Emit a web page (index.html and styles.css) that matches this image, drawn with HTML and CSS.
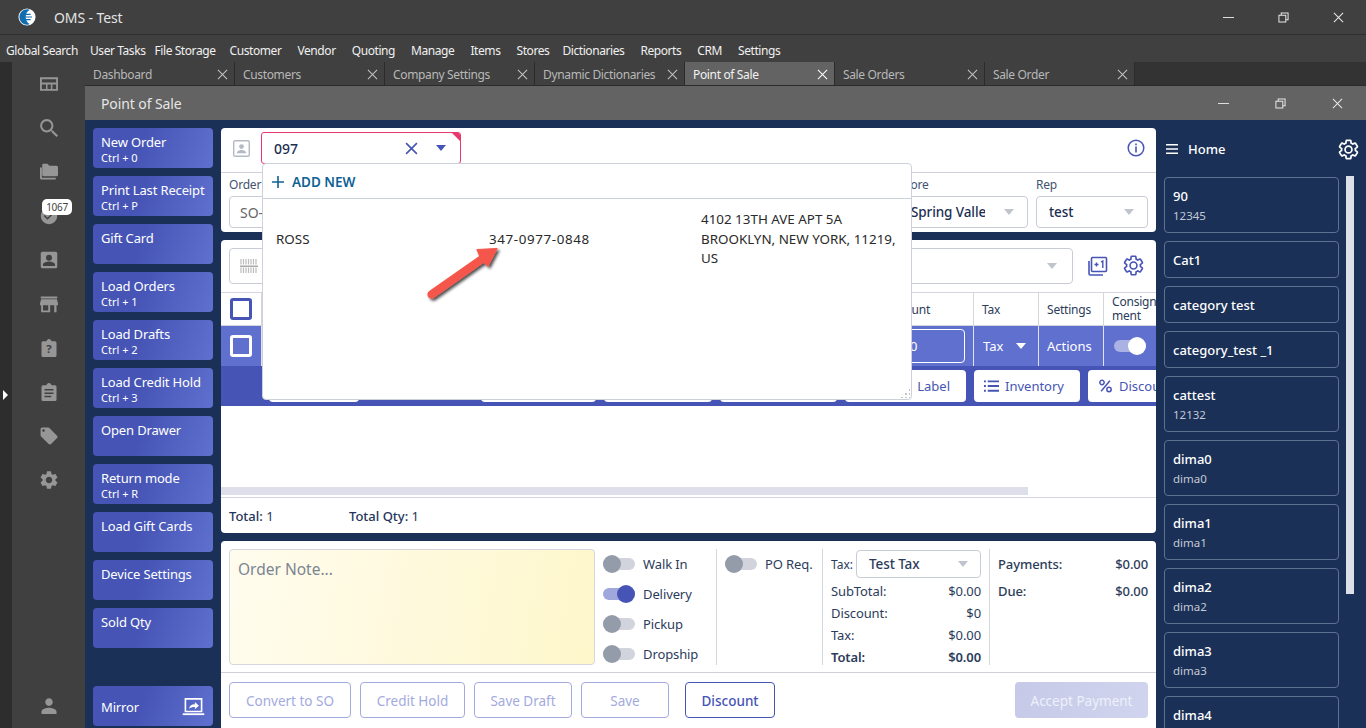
FILE: index.html
```html
<!DOCTYPE html>
<html lang="en">
<head>
<meta charset="utf-8">
<title>OMS - Test</title>
<link rel="stylesheet" href="styles.css">
</head>
<body>
<svg class="sprite" aria-hidden="true">
  <symbol id="i-gear" viewBox="0 0 24 24"><path d="M19.14 12.94c.04-.3.06-.61.06-.94 0-.32-.02-.64-.07-.94l2.03-1.58a.49.49 0 00.12-.61l-1.92-3.32a.488.488 0 00-.59-.22l-2.39.96c-.5-.38-1.03-.7-1.62-.94l-.36-2.54a.484.484 0 00-.48-.41h-3.84c-.24 0-.43.17-.47.41l-.36 2.54c-.59.24-1.13.57-1.62.94l-2.39-.96c-.22-.08-.47 0-.59.22L2.74 8.87c-.12.21-.08.47.12.61l2.03 1.58c-.05.3-.09.63-.09.94s.02.64.07.94l-2.03 1.58a.49.49 0 00-.12.61l1.92 3.32c.12.22.37.29.59.22l2.39-.96c.5.38 1.03.7 1.62.94l.36 2.54c.05.24.24.41.48.41h3.84c.24 0 .44-.17.47-.41l.36-2.54c.59-.24 1.13-.56 1.62-.94l2.39.96c.22.08.47 0 .59-.22l1.92-3.32c.12-.22.07-.47-.12-.61l-2.01-1.58zM12 15.6c-1.98 0-3.6-1.62-3.6-3.6s1.62-3.6 3.6-3.6 3.6 1.62 3.6 3.6-1.62 3.6-3.6 3.6z"/></symbol>
  <symbol id="i-x" viewBox="0 0 12 12"><path d="M1 1l10 10M11 1L1 11" fill="none" stroke="currentColor" stroke-width="1.1"/></symbol>
  <symbol id="i-restore" viewBox="0 0 12 12"><path d="M1 3.5h7.5V11H1zM3.5 3.5V1H11v7.5H8.5" fill="none" stroke="currentColor" stroke-width="1.1"/></symbol>
</svg>

<div class="app">
  <header class="titlebar">
    <svg class="logo" viewBox="0 0 20 20"><circle cx="10" cy="10" r="9.5" fill="#fff"/><path d="M10 1.5a8.5 8.5 0 000 17c1.500 0 2.500-.4 3-.8-2.500-1-4.500-4-4.500-7.700s2-6.700 4.500-7.700c-.5-.4-1.500-.8-3-.8z" fill="#0f6cb0"/><path d="M8 7h6M6.500 10h9M8 13h6" stroke="#0f6cb0" stroke-width="1.300"/></svg>
    <span class="app-name">OMS - Test</span>
    <div class="win-ctrl">
      <span class="wc-btn"><i class="wc-min"></i></span>
      <span class="wc-btn"><svg class="wc-ico"><use href="#i-restore"/></svg></span>
      <span class="wc-btn"><svg class="wc-ico"><use href="#i-x"/></svg></span>
    </div>
  </header>

  <nav class="menubar">
    <span>Global Search</span><span>User Tasks</span><span>File Storage</span><span>Customer</span><span>Vendor</span><span>Quoting</span><span>Manage</span><span>Items</span><span>Stores</span><span>Dictionaries</span><span>Reports</span><span>CRM</span><span>Settings</span>
  </nav>

  <div class="workarea">
    <div class="strip"><i class="strip-arrow"></i></div>

    <aside class="nav">
      <div class="nav-item"><svg viewBox="0 0 24 24"><path fill-rule="evenodd" d="M0 3h24v18H0zM2.500 5.500v4.500h19V5.500zM2.500 12.500v6h5.500v-6zM10 12.500v6h4.500v-6zM16.500 12.500v6h5v-6z"/></svg></div>
      <div class="nav-item"><svg viewBox="0 0 24 24"><path d="M15.500 14h-.79l-.28-.27A6.470 6.470 0 0016 9.500 6.500 6.500 0 109.500 16c1.610 0 3.090-.59 4.230-1.570l.27.28v.79l5 4.990L20.490 19l-4.990-5zm-6 0C7.010 14 5 11.990 5 9.500S7.010 5 9.500 5 14 7.010 14 9.500 11.990 14 9.500 14z" transform="translate(-4 -4) scale(1.370)"/></svg></div>
      <div class="nav-item"><svg viewBox="0 0 24 24"><path d="M2.500 6H0v14a2 2 0 002 2h19v-2.500H2.500z"/><path d="M22 4H12.500l-2.500-2.500H5a2 2 0 00-2 .5V16a2 2 0 002 2h17a2 2 0 002-2V6a2 2 0 00-2-2z" transform="translate(0 -.500)"/></svg></div>
      <div class="nav-item has-badge"><svg viewBox="0 0 24 24"><path d="M12 1a11 11 0 100 22 11 11 0 000-22zm-2 16l-5-5 1.410-1.410L10 14.170l7.590-7.590L19 8l-9 9z"/></svg><span class="badge">1067</span></div>
      <div class="nav-item"><svg viewBox="0 0 24 24"><path d="M1 3v18a2 2 0 002 2h18a2 2 0 002-2V3a2 2 0 00-2-2H3a2 2 0 00-2 2zm15 6a4 4 0 11-8 0 4 4 0 018 0zM4 18c0-2.700 5.300-4.100 8-4.100s8 1.400 8 4.100v2H4v-2z"/></svg></div>
      <div class="nav-item"><svg viewBox="0 0 24 24"><path d="M23 2H1v2.500h22zM24 13.500V11l-1.500-5.500h-21L0 11v2.500h1.500V23h12v-9.500h5.500V23h3v-9.500zm-13 7H4v-7h7z"/></svg></div>
      <div class="nav-item"><svg viewBox="0 0 24 24"><path d="M20 3h-4.500C15 1.500 13.700 0 12 0S9 1.500 8.500 3H4a2 2 0 00-2 2v17a2 2 0 002 2h16a2 2 0 002-2V5a2 2 0 00-2-2z"/><text x="12" y="19" class="nav-q">?</text></svg></div>
      <div class="nav-item"><svg viewBox="0 0 24 24"><path d="M20 3h-4.500C15 1.500 13.700 0 12 0S9 1.500 8.500 3H4a2 2 0 00-2 2v17a2 2 0 002 2h16a2 2 0 002-2V5a2 2 0 00-2-2zm-5 16H6v-2h9zm3-4.500H6v-2h12zM18 10H6V8h12z"/></svg></div>
      <div class="nav-item"><svg viewBox="0 0 24 24"><path d="M21.410 11.580l-9-9C12.050 2.220 11.550 2 11 2H4c-1.100 0-2 .9-2 2v7c0 .55.22 1.050.59 1.420l9 9c.36.36.86.58 1.410.58.55 0 1.050-.22 1.410-.59l7-7c.37-.36.59-.86.59-1.410 0-.55-.23-1.060-.59-1.420zM5.500 7C4.670 7 4 6.330 4 5.500S4.670 4 5.500 4 7 4.670 7 5.500 6.330 7 5.500 7z" transform="translate(-1.500 -1.500) scale(1.130)"/></svg></div>
      <div class="nav-item"><svg viewBox="0 0 24 24"><use href="#i-gear" transform="translate(-2.400 -2.400) scale(1.200)"/></svg></div>
      <div class="nav-item nav-bottom"><svg viewBox="0 0 24 24"><path d="M12 12c2.900 0 5-2.300 5-5.200S14.900 1.500 12 1.500 7 3.900 7 6.800 9.100 12 12 12zm0 2.200c-3.300 0-10 1.700-10 5V22.500h20v-3.300c0-3.300-6.700-5-10-5z"/></svg></div>
    </aside>

    <div class="desk">
      <div class="tabs">
        <div class="tab"><span>Dashboard</span><svg class="tab-x"><use href="#i-x"/></svg></div>
        <div class="tab"><span>Customers</span><svg class="tab-x"><use href="#i-x"/></svg></div>
        <div class="tab"><span>Company Settings</span><svg class="tab-x"><use href="#i-x"/></svg></div>
        <div class="tab"><span>Dynamic Dictionaries</span><svg class="tab-x"><use href="#i-x"/></svg></div>
        <div class="tab active"><span>Point of Sale</span><svg class="tab-x"><use href="#i-x"/></svg></div>
        <div class="tab"><span>Sale Orders</span><svg class="tab-x"><use href="#i-x"/></svg></div>
        <div class="tab"><span>Sale Order</span><svg class="tab-x"><use href="#i-x"/></svg></div>
      </div>

      <div class="window-title">
        <span class="wt-name">Point of Sale</span>
        <div class="win-ctrl inner">
          <span class="wc-btn"><i class="wc-min"></i></span>
          <span class="wc-btn"><svg class="wc-ico"><use href="#i-restore"/></svg></span>
          <span class="wc-btn"><svg class="wc-ico"><use href="#i-x"/></svg></span>
        </div>
      </div>

      <main class="pos">
        <div class="actions">
          <button class="act"><b>New Order</b><small>Ctrl + 0</small></button>
          <button class="act"><b>Print Last Receipt</b><small>Ctrl + P</small></button>
          <button class="act"><b>Gift Card</b></button>
          <button class="act"><b>Load Orders</b><small>Ctrl + 1</small></button>
          <button class="act"><b>Load Drafts</b><small>Ctrl + 2</small></button>
          <button class="act"><b>Load Credit Hold</b><small>Ctrl + 3</small></button>
          <button class="act"><b>Open Drawer</b></button>
          <button class="act"><b>Return mode</b><small>Ctrl + R</small></button>
          <button class="act"><b>Load Gift Cards</b></button>
          <button class="act"><b>Device Settings</b></button>
          <button class="act"><b>Sold Qty</b></button>
          <button class="act mirror"><b>Mirror</b>
            <svg viewBox="0 0 24 20" class="mirror-ico"><path d="M3 1h18v14H3z" fill="none" stroke="#fff" stroke-width="1.800"/><path d="M0 17h24v2H0z" fill="#fff"/><path d="M7 12c.5-3 2.500-5 6.500-5V4.500L18 8.500l-4.500 4V10c-3 0-5 .5-6.500 2z" fill="#fff"/></svg>
          </button>
        </div>

        <div class="center">
          <section class="card card-top">
            <div class="cust-row">
              <svg class="cust-ico" viewBox="0 0 18 18"><rect x=".75" y=".75" width="16.500" height="16.500" rx="1.500" fill="none" stroke="#b5b9c3" stroke-width="1.500"/><circle cx="9" cy="7" r="2.500" fill="#b5b9c3"/><path d="M4 14c0-2.500 3-3.400 5-3.400s5 .9 5 3.400z" fill="#b5b9c3"/></svg>
              <div class="cust-input">
                <span class="cust-val">097</span>
                <svg class="cust-x" viewBox="0 0 12 12"><path d="M1 1l10 10M11 1L1 11" fill="none" stroke="#4655b5" stroke-width="1.500"/></svg>
                <i class="caret caret-blue"></i>
              </div>
              <svg class="info-ico" viewBox="0 0 18 18"><circle cx="9" cy="9" r="7.800" fill="none" stroke="#4655b5" stroke-width="1.500"/><path d="M8.200 7.500h1.600v6H8.200zM8.200 4.500h1.600v1.700H8.200z" fill="#4655b5"/></svg>
            </div>
            <div class="field-row">
              <div class="field f-order"><label>Order</label><div class="select"><span class="sel-grey">SO-</span></div></div>
              <div class="field f-store"><label>Store</label><div class="select"><span class="sel-val clip">Spring Valley</span><i class="caret"></i></div></div>
              <div class="field f-rep"><label>Rep</label><div class="select rep"><span class="sel-val">test</span><i class="caret"></i></div></div>
            </div>
          </section>

          <section class="card card-items">
            <div class="search-row">
              <div class="scan-box">
                <svg viewBox="0 0 18 14" class="scan-ico"><path d="M1 0v5.500M3.500 0v5.500M6 0v5.500M8.500 0v5.500M11 0v5.500M13.500 0v5.500M16 0v5.500M1 8.500V14M3.500 8.500V14M6 8.500V14M8.500 8.500V14M11 8.500V14M13.500 8.500V14M16 8.500V14" stroke="#bbb" stroke-width="1.200"/><path d="M0 6.500h18v1.500H0z" fill="#aaa"/></svg>
                <i class="caret"></i>
              </div>
              <svg class="s-ico" viewBox="0 0 20 20"><path d="M4.500 1.500h13a1 1 0 011 1v12a1 1 0 01-1 1h-13a1 1 0 01-1-1v-12a1 1 0 011-1z" fill="none" stroke="#4655b5" stroke-width="1.600"/><path d="M1 5v12.500a1.500 1.500 0 001.500 1.500H15" fill="none" stroke="#4655b5" stroke-width="1.600"/><path d="M6.500 8.500h4M8.500 6.500v4M13 6l1.800-1v7" fill="none" stroke="#4655b5" stroke-width="1.400"/></svg>
              <svg class="s-ico gear" viewBox="0 0 24 24"><use href="#i-gear"/></svg>
            </div>

            <div class="tbl-head">
              <div class="cell cb"><i class="check"></i></div>
              <div class="cell"></div>
              <div class="cell">Discount</div>
              <div class="cell">Tax</div>
              <div class="cell">Settings</div>
              <div class="cell small">Consign<br>ment</div>
            </div>
            <div class="tbl-row">
              <div class="cell cb"><i class="check light"></i></div>
              <div class="cell"></div>
              <div class="cell"><div class="disc-input">0</div></div>
              <div class="cell tax-cell">Tax<i class="caret caret-white"></i></div>
              <div class="cell">Actions</div>
              <div class="cell"><span class="toggle on-white"><i></i></span></div>
            </div>
            <div class="tbl-actions">
              <span class="ta-btn w90"></span>
              <span class="ta-btn solid w120"></span>
              <span class="ta-btn w115"></span>
              <span class="ta-btn w108"></span>
              <span class="ta-btn w116"></span>
              <span class="ta-btn w121">Label</span>
              <span class="ta-btn w106"><svg viewBox="0 0 16 14"><path d="M0 1h2v2H0zM0 6h2v2H0zM0 11h2v2H0zM4 1h12v2H4zM4 6h12v2H4zM4 11h12v2H4z" fill="#4655b5"/></svg>Inventory</span>
              <span class="ta-btn grow"><svg viewBox="0 0 16 16"><circle cx="4" cy="4" r="2.500" fill="none" stroke="#4655b5" stroke-width="1.700"/><circle cx="12" cy="12" r="2.500" fill="none" stroke="#4655b5" stroke-width="1.700"/><path d="M13 2L3 14" stroke="#4655b5" stroke-width="1.700"/></svg>Discount</span>
            </div>
            <div class="tbl-fill"></div>
            <div class="hscroll"><i></i></div>
            <div class="totals"><span class="t1"><b>Total:</b> 1</span><span><b>Total Qty:</b> 1</span></div>
          </section>

          <section class="card card-bottom">
            <div class="summary">
              <div class="note">Order Note...</div>
              <div class="toggles">
                <div class="tg"><span class="toggle"><i></i></span>Walk In</div>
                <div class="tg"><span class="toggle on"><i></i></span>Delivery</div>
                <div class="tg"><span class="toggle"><i></i></span>Pickup</div>
                <div class="tg"><span class="toggle"><i></i></span>Dropship</div>
              </div>
              <div class="po"><div class="tg"><span class="toggle"><i></i></span>PO Req.</div></div>
              <div class="amounts">
                <div class="tax-line"><span class="tax-lbl">Tax:</span><div class="select tax-sel"><span class="sel-val">Test Tax</span><i class="caret"></i></div></div>
                <div class="amt"><span>SubTotal:</span><span>$0.00</span></div>
                <div class="amt"><span>Discount:</span><span>$0</span></div>
                <div class="amt"><span>Tax:</span><span>$0.00</span></div>
                <div class="amt strong"><span>Total:</span><span>$0.00</span></div>
              </div>
              <div class="pay">
                <div class="amt p1"><span>Payments:</span><span>$0.00</span></div>
                <div class="amt p2"><span>Due:</span><span>$0.00</span></div>
              </div>
            </div>
            <div class="bottom-btns">
              <button class="btn dis b1">Convert to SO</button>
              <button class="btn dis b2">Credit Hold</button>
              <button class="btn dis b3">Save Draft</button>
              <button class="btn dis b4">Save</button>
              <button class="btn b5">Discount</button>
              <button class="btn accept">Accept Payment</button>
            </div>
          </section>

          <div class="dropdown">
            <div class="dd-add"><svg viewBox="0 0 12 12"><path d="M6 0v12M0 6h12" stroke="#0e6295" stroke-width="1.600"/></svg>ADD NEW</div>
            <div class="dd-row">
              <span class="dd-name">ROSS</span>
              <span class="dd-phone">347-0977-0848</span>
              <span class="dd-addr">4102 13TH AVE APT 5A<br>BROOKLYN, NEW YORK, 11219,<br>US</span>
            </div>
            <i class="dd-grip"></i>
          </div>
          <svg class="pointer" viewBox="0 0 80 60"><defs><filter id="sh" x="-20%" y="-20%" width="150%" height="150%"><feDropShadow dx="2" dy="2" stdDeviation="1.500" flood-color="#000" flood-opacity=".7"/></filter></defs><path d="M71 3.500L51 4.500L53.900 11.200L3.500 46.600A3.500 3.500 0 0 0 7.500 52.400L57.900 17L62 21Z" fill="#f5574b" stroke="#f5574b" stroke-linejoin="round" stroke-width="1.200" filter="url(#sh)"/></svg>
        </div>

        <aside class="side">
          <div class="side-head">
            <svg class="burger" viewBox="0 0 12 10"><path d="M0 0h12v1.600H0zM0 4.200h12v1.600H0zM0 8.400h12V10H0z" fill="#fff"/></svg>
            <span class="home">Home</span>
            <svg class="side-gear" viewBox="0 0 24 24"><use href="#i-gear"/></svg>
          </div>
          <div class="side-body">
            <div class="cat-list">
              <div class="cat"><b>90</b><small>12345</small></div>
              <div class="cat short"><b>Cat1</b></div>
              <div class="cat short"><b>category test</b></div>
              <div class="cat short"><b>category_test _1</b></div>
              <div class="cat"><b>cattest</b><small>12132</small></div>
              <div class="cat"><b>dima0</b><small>dima0</small></div>
              <div class="cat"><b>dima1</b><small>dima1</small></div>
              <div class="cat"><b>dima2</b><small>dima2</small></div>
              <div class="cat"><b>dima3</b><small>dima3</small></div>
              <div class="cat"><b>dima4</b><small>dima4</small></div>
            </div>
            <div class="side-thumb"></div>
          </div>
        </aside>
      </main>
    </div>
  </div>
</div>
</body>
</html>
```
FILE: styles.css
```css
* { box-sizing: border-box; }
html, body { margin: 0; padding: 0; height: 728px; overflow: hidden; }
body { font-family: "Noto Sans", "Open Sans", sans-serif; font-size: 13px; color: #1c2f52; background: #404040; }
.sprite { position: absolute; width: 0; height: 0; }
.app { width: 1366px; height: 728px; display: flex; flex-direction: column; overflow: hidden; }

.titlebar { height: 35px; flex: none; background: #404040; border-bottom: 1px solid #2f2f2f; display: flex; align-items: center; padding-left: 18px; color: #e4e4e4; }
.logo { width: 18px; height: 18px; }
.app-name { margin-left: 18px; font-size: 14px; letter-spacing: -.1px; }
.win-ctrl { margin-left: auto; display: flex; color: #e8e8e8; }
.wc-btn { width: 55px; display: flex; justify-content: center; align-items: center; height: 16px; }
.wc-min { width: 11px; height: 1px; background: #ddd; }
.wc-ico { width: 11px; height: 11px; }
.inner .wc-btn { width: 57px; }

.menubar { height: 27px; flex: none; background: #404040; display: flex; align-items: center; padding: 3px 0 0 6px; gap: 16px; color: #f0f0f0; font-size: 12px; letter-spacing: -.42px; }
.menubar span:nth-child(1) { margin-right: -4px; }
.menubar span:nth-child(2) { margin-right: -7px; }
.menubar span:nth-child(3) { margin-right: -2px; }
.menubar span:nth-child(9) { margin-right: -3px; }

.workarea { flex: 1; display: flex; min-height: 0; }
.strip { width: 12px; flex: none; background: #2d2d2d; position: relative; }
.strip-arrow { position: absolute; left: 3px; top: 328px; border-left: 5px solid #fff; border-top: 5px solid transparent; border-bottom: 5px solid transparent; }
.nav { width: 73px; flex: none; background: #404040; display: flex; flex-direction: column; }
.nav-item { height: 44px; flex: none; display: flex; align-items: center; justify-content: center; position: relative; }
.nav-item svg { width: 18px; height: 18px; fill: #969696; overflow: visible; }
.nav-bottom { margin-top: auto; }
.nav-q { font-size: 15px; font-weight: 700; text-anchor: middle; fill: #404040; }
.badge { position: absolute; left: 30px; top: 5px; width: 30px; height: 16px; background: #fff; border-radius: 5px; color: #444; font-size: 10px; letter-spacing: -.3px; display: flex; align-items: center; justify-content: center; }

.desk { flex: 1; min-width: 0; display: flex; flex-direction: column; }
.tabs { height: 24px; flex: none; background: #333; display: flex; border-bottom: 1px solid #2b2b2b; }
.tab { width: 150px; flex: none; background: #404040; border-right: 1px solid #2b2b2b; display: flex; align-items: center; justify-content: space-between; padding: 2px 6px 0 8px; color: #b8b8b8; font-size: 12px; letter-spacing: -.35px; }
.tab.active { background: #636363; color: #f2f2f2; }
.tab-x { width: 11px; height: 11px; color: #c4c4c4; margin-top: -1px; }
.tab.active .tab-x { color: #fff; }

.window-title { height: 34px; flex: none; background: #636363; display: flex; align-items: center; padding-left: 16px; color: #e6e6e6; font-size: 14px; letter-spacing: -.1px; }

.pos { flex: 1; min-height: 0; background: #1a3057; display: flex; padding: 8px 0 0 8px; overflow: hidden; }

.actions { width: 120px; flex: none; display: flex; flex-direction: column; gap: 8px; }
.act { height: 40px; flex: none; border: 0; border-radius: 4px; background: linear-gradient(110deg, #4655b5 40%, #5f70cf 100%); color: #fff; font-family: inherit; text-align: left; padding: 5px 8px 0; display: flex; flex-direction: column; align-items: flex-start; letter-spacing: -.15px; }
.act b { font-weight: 400; font-size: 13px; line-height: 18px; }
.act small { font-size: 11px; line-height: 13px; letter-spacing: 0; }
.mirror { margin-top: 30px; flex-direction: row; justify-content: space-between; align-items: center; padding: 1px 8px 0; }
.mirror-ico { width: 23px; height: 18px; }

.center { width: 935px; flex: none; margin-left: 8px; display: flex; flex-direction: column; gap: 8px; position: relative; }
.card { background: #fff; border-radius: 4px; flex: none; }

.card-top { height: 104px; }
.cust-row { height: 45px; display: flex; align-items: flex-start; padding-left: 12px; border-bottom: 1px solid #cfd2dc; position: relative; }
.cust-ico { width: 17px; height: 17px; margin-top: 12px; }
.cust-input { width: 200px; height: 32px; margin: 4px 0 0 11px; border: 1px solid #e8386e; border-radius: 3px; position: relative; display: flex; align-items: center; padding-left: 12px; overflow: hidden; }
.cust-input::after { content: ""; position: absolute; right: 0; top: 0; border-top: 8px solid #e8386e; border-left: 8px solid transparent; }
.cust-val { font-size: 14px; font-weight: 500; flex: 1; }
.cust-x { width: 13px; height: 13px; margin-right: 18px; }
.caret { width: 0; height: 0; border-left: 5.500px solid transparent; border-right: 5.500px solid transparent; border-top: 6.500px solid #c0c4cd; }
.caret-blue { border-top-color: #4655b5; margin-right: 14px; border-left-width: 5px; border-right-width: 5px; border-top-width: 6px; }
.caret-white { border-top-color: #fff; margin-left: 13px; }
.info-ico { width: 18px; height: 18px; margin: 11px 11px 0 auto; }

.field-row { display: flex; padding: 5px 8px 0; }
.field label { display: block; font-size: 12px; line-height: 13px; color: #43536f; height: 18px; letter-spacing: -.2px; }
.select { height: 32px; border: 1px solid #c8ccd6; border-radius: 4px; display: flex; align-items: center; padding: 0 10px; }
.f-order { width: 671px; }
.f-order .select { width: 200px; }
.sel-grey { color: #666; font-size: 14px; }
.f-store { width: 128px; }
.sel-val { font-size: 13.500px; font-weight: 500; letter-spacing: -.1px; }
.clip { width: 74px; overflow: hidden; white-space: nowrap; flex: none; }
.f-store .caret, .rep .caret { margin-left: auto; margin-right: 3px; }
.f-rep { width: 112px; margin-left: 8px; }
.rep { padding-left: 12px; }

.card-items { height: 293px; display: flex; flex-direction: column; }
.search-row { height: 52px; flex: none; display: flex; align-items: flex-start; padding: 8px 0 0 8px; }
.scan-box { width: 844px; height: 36px; border: 1px solid #c8ccd6; border-radius: 4px; display: flex; align-items: center; padding: 0 15px 0 10px; justify-content: space-between; }
.scan-ico { width: 18px; height: 14px; }
.s-ico { width: 20px; height: 20px; margin: 8px 0 0 15px; flex: none; }
.gear { width: 23px; height: 23px; margin: 6px 0 0 14px; fill: none; stroke: #4655b5; stroke-width: 1.700; }

.tbl-head, .tbl-row { display: grid; grid-template-columns: 40px 612px 100px 65px 65px 53px; flex: none; }
.tbl-head { height: 34px; border-top: 1px solid #d4d6de; border-bottom: 1px solid #d4d6de; font-size: 12px; color: #2c3c5b; letter-spacing: -.2px; }
.tbl-row { height: 40px; background: #5f70cf; color: #fff; font-size: 13px; }
.cell { display: flex; align-items: center; padding-left: 8px; border-left: 1px solid #d4d6de; }
.cell.cb { border-left: 0; padding-left: 9px; }
.tbl-row .cell { border-left-color: #dfe2f3; }
.small { font-size: 12px; line-height: 14px; white-space: nowrap; overflow: hidden; }
.check { width: 22px; height: 22px; border: 3px solid #4655b5; border-radius: 3px; }
.check.light { border-color: #fff; background: #5f70cf; }
.disc-input { width: 83px; height: 34px; border: 1px solid #fff; border-radius: 4px; padding: 7px 0 0 27px; }
.tax-cell { padding-left: 9px; }
.toggle { width: 32px; height: 12px; border-radius: 6px; background: #d1d4dc; position: relative; display: inline-block; flex: none; }
.toggle i { position: absolute; left: 0; top: -3px; width: 18px; height: 18px; border-radius: 50%; background: #949ba9; }
.toggle.on { background: #a0a7dc; }
.toggle.on i { left: 14px; background: #4655b5; }
.on-white { background: #a9b2e3; margin-left: 2px; }
.on-white i { left: 14px; background: #fff; }

.tbl-actions { height: 40px; flex: none; background: #4655b5; display: flex; gap: 8px; padding: 4px 0 4px 48px; overflow: hidden; }
.ta-btn { height: 32px; background: #fff; border-radius: 4px; flex: none; color: #4655b5; display: flex; align-items: center; gap: 6px; padding-left: 10px; font-size: 13px; }
.ta-btn svg { width: 15px; height: 14px; flex: none; }
.ta-btn.solid { background: #4655b5; }
.w90 { width: 90px; }
.w120 { width: 108px; margin: 0 -1px; }
.w115 { width: 115px; }
.w108 { width: 108px; }
.w116 { width: 117px; }
.w121 { width: 121px; justify-content: flex-end; padding-right: 16px; }
.w106 { width: 106px; }
.grow { width: 90px; }
.tbl-fill { height: 81px; flex: none; }
.hscroll { height: 10px; flex: none; }
.hscroll i { display: block; width: 807px; height: 8px; background: #dde0ea; }
.totals { flex: 1; border-top: 1px solid #d4d6de; display: flex; align-items: center; padding: 1px 0 0 8px; font-size: 13px; color: #24365a; }
.totals b { font-weight: 500; }
.t1 { width: 120px; }

.card-bottom { height: 190px; }
.summary { height: 132px; padding: 8px 8px 0; display: flex; border-bottom: 1px solid #cfd2dc; }
.note { width: 366px; height: 116px; flex: none; background: linear-gradient(100deg, #fffcee, #fef7cb); border: 1px solid #d6d6de; border-radius: 4px; padding: 9px 8px; font-size: 15.500px; line-height: 20px; color: #7b8593; }
.toggles { width: 122px; flex: none; height: 116px; padding: 0 0 0 8px; border-right: 1px solid #d4d6de; display: flex; flex-direction: column; }
.tg { height: 30px; flex: none; display: flex; align-items: center; gap: 8px; font-size: 13px; color: #2c3c5b; letter-spacing: -.1px; }
.po { width: 106px; flex: none; height: 116px; padding-left: 8px; border-right: 1px solid #d4d6de; }
.amounts { width: 167px; flex: none; height: 116px; padding: 0 8px; border-right: 1px solid #d4d6de; font-size: 13px; color: #2c3c5b; }
.tax-line { display: flex; align-items: center; height: 30px; gap: 3px; margin-bottom: 1px; }
.tax-lbl { font-size: 12px; }
.tax-sel { width: 125px; height: 28px; padding: 0 12px; justify-content: space-between; }
.amt { display: flex; justify-content: space-between; height: 22px; line-height: 22px; letter-spacing: -.1px; }
.strong { font-weight: 600; }
.pay { flex: 1; padding-left: 8px; color: #2c3c5b; }
.p1 { font-weight: 500; height: 30px; line-height: 30px; }
.p2 { font-weight: 500; height: 24px; line-height: 24px; }
.bottom-btns { display: flex; padding: 9px 8px 0; }
.btn { height: 36px; border: 1px solid #4655b5; border-radius: 4px; background: #fff; font-family: inherit; font-size: 13.500px; color: #4655b5; font-weight: 500; padding: 1px 0 0; flex: none; }
.btn.dis { border-color: #a3aae0; color: #a3aae0; font-weight: 400; }
.b1 { width: 122px; }
.b2 { width: 105px; margin-left: 9px; }
.b3 { width: 98px; margin-left: 9px; }
.b4 { width: 88px; margin-left: 9px; }
.b5 { width: 90px; margin-left: 16px; }
.accept { width: 133px; margin-left: auto; border: 0; background: linear-gradient(100deg, #c6cae8, #d0d4ee); color: #eef0fa; font-weight: 400; }

.dropdown { position: absolute; left: 41px; top: 35px; width: 650px; height: 237px; background: #fff; border: 1px solid #cdd1da; border-radius: 4px; z-index: 3; }
.dd-add { height: 35px; border-bottom: 1px solid #cdd1da; display: flex; align-items: center; padding: 1px 0 0 9px; gap: 8px; color: #0e6295; font-size: 13.500px; font-weight: 600; }
.dd-add svg { width: 12px; height: 12px; }
.dd-row { display: flex; padding: 11px 0 0 13px; align-items: center; font-size: 13.400px; color: #2a2a2a; line-height: 19.500px; }
.dd-name { width: 213px; }
.dd-phone { width: 212px; letter-spacing: .6px; }
.dd-addr { white-space: nowrap; }
.dd-grip { position: absolute; right: 1px; bottom: 1px; width: 10px; height: 10px; background-image: radial-gradient(#c4c4c4 1px, transparent 1.200px); background-size: 4px 4px; clip-path: polygon(100% 0, 100% 100%, 0 100%); }
.pointer { position: absolute; left: 205px; top: 117px; width: 80px; height: 60px; z-index: 4; overflow: visible; }

.side { width: 202px; flex: none; margin-left: 8px; display: flex; flex-direction: column; }
.side-head { height: 49px; flex: none; display: flex; align-items: center; padding: 0 8px 7px 2px; color: #fff; }
.burger { width: 12px; height: 10px; }
.home { margin-left: 10px; font-size: 13px; font-weight: 500; }
.side-gear { width: 23px; height: 23px; margin-left: auto; fill: none; stroke: #fff; stroke-width: 1.800; margin-right: -2px; }
.side-body { display: flex; align-items: flex-start; }
.cat-list { width: 175px; flex: none; display: flex; flex-direction: column; gap: 8px; }
.cat { height: 56px; flex: none; border: 1px solid #5d7191; border-radius: 4px; padding: 8px 8px 0; color: #fff; }
.cat.short { height: 37px; }
.cat b { display: block; font-size: 13px; line-height: 20px; font-weight: 500; }
.cat small { display: block; font-size: 11.500px; line-height: 20px; color: #c3c9d5; }
.side-thumb { width: 8px; height: 418px; background: #dde0ea; margin: -1px 0 0 7px; flex: none; }
```
